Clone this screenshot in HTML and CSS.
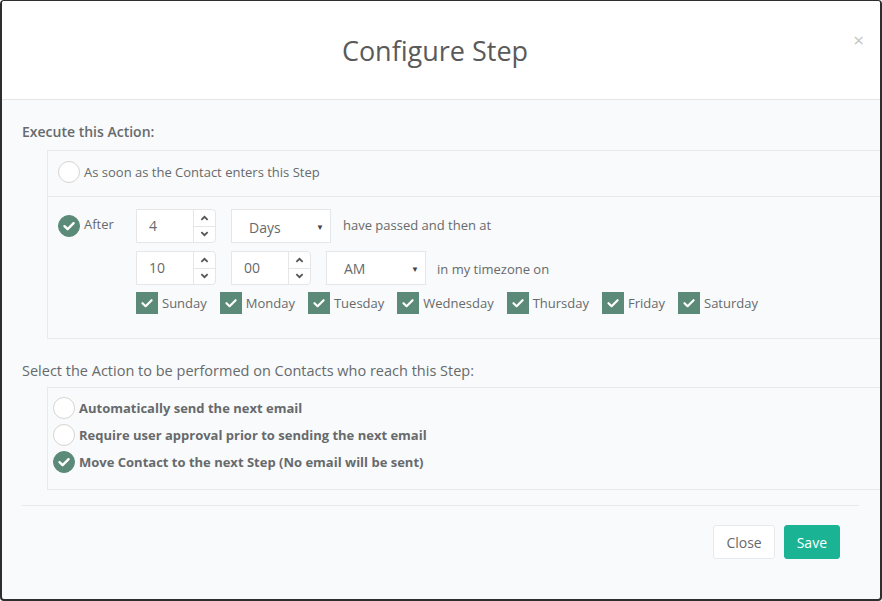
FILE: index.html
```html
<!DOCTYPE html>
<html>
<head>
<meta charset="utf-8">
<link rel="stylesheet" href="styles.css">
</head>
<body>
<div class="modal">
  <div class="modal-header">
    <h4 class="modal-title">Configure Step</h4>
    <span class="close">&times;</span>
  </div>
  <div class="modal-body">
    <div class="section-title strong">Execute this Action:</div>
    <div class="box box1">
      <div class="row row-first">
        <span class="radio"></span>
        <span class="label">As soon as the Contact enters this Step</span>
      </div>
      <div class="row row-after">
        <div class="after-col">
          <span class="radio checked"><svg viewBox="0 0 22 22" width="22" height="22"><path d="M6.5 11.2 L9.6 14.2 L15.6 8.2" fill="none" stroke="#fff" stroke-width="2.4" stroke-linecap="round" stroke-linejoin="round"/></svg></span>
          <span class="label">After</span>
        </div>
        <div class="controls">
          <div class="line">
            <div class="spin">
              <span class="val">4</span>
              <div class="arrows">
                <span class="arr"><svg viewBox="0 0 10 6" width="9" height="6"><path d="M1.5 5 L5 1.6 L8.5 5" fill="none" stroke="#555" stroke-width="2"/></svg></span>
                <span class="arr"><svg viewBox="0 0 10 6" width="9" height="6"><path d="M1.5 1 L5 4.4 L8.5 1" fill="none" stroke="#555" stroke-width="2"/></svg></span>
              </div>
            </div>
            <div class="select sel-days"><span>Days</span><span class="caret">&#9660;</span></div>
            <span class="text">have passed and then at</span>
          </div>
          <div class="line line2">
            <div class="spin">
              <span class="val">10</span>
              <div class="arrows">
                <span class="arr"><svg viewBox="0 0 10 6" width="9" height="6"><path d="M1.5 5 L5 1.6 L8.5 5" fill="none" stroke="#555" stroke-width="2"/></svg></span>
                <span class="arr"><svg viewBox="0 0 10 6" width="9" height="6"><path d="M1.5 1 L5 4.4 L8.5 1" fill="none" stroke="#555" stroke-width="2"/></svg></span>
              </div>
            </div>
            <div class="spin">
              <span class="val">00</span>
              <div class="arrows">
                <span class="arr"><svg viewBox="0 0 10 6" width="9" height="6"><path d="M1.5 5 L5 1.6 L8.5 5" fill="none" stroke="#555" stroke-width="2"/></svg></span>
                <span class="arr"><svg viewBox="0 0 10 6" width="9" height="6"><path d="M1.5 1 L5 4.4 L8.5 1" fill="none" stroke="#555" stroke-width="2"/></svg></span>
              </div>
            </div>
            <div class="select sel-ampm"><span>AM</span><span class="caret">&#9660;</span></div>
            <span class="text tz">in my timezone on</span>
          </div>
          <div class="days">
            <label class="day"><span class="cb"><svg viewBox="0 0 22 22" width="22" height="22"><path d="M6.5 11.2 L9.6 14.2 L15.6 8.2" fill="none" stroke="#fff" stroke-width="2.2" stroke-linecap="round" stroke-linejoin="round"/></svg></span>Sunday</label>
            <label class="day"><span class="cb"><svg viewBox="0 0 22 22" width="22" height="22"><path d="M6.5 11.2 L9.6 14.2 L15.6 8.2" fill="none" stroke="#fff" stroke-width="2.2" stroke-linecap="round" stroke-linejoin="round"/></svg></span>Monday</label>
            <label class="day"><span class="cb"><svg viewBox="0 0 22 22" width="22" height="22"><path d="M6.5 11.2 L9.6 14.2 L15.6 8.2" fill="none" stroke="#fff" stroke-width="2.2" stroke-linecap="round" stroke-linejoin="round"/></svg></span>Tuesday</label>
            <label class="day"><span class="cb"><svg viewBox="0 0 22 22" width="22" height="22"><path d="M6.5 11.2 L9.6 14.2 L15.6 8.2" fill="none" stroke="#fff" stroke-width="2.2" stroke-linecap="round" stroke-linejoin="round"/></svg></span>Wednesday</label>
            <label class="day"><span class="cb"><svg viewBox="0 0 22 22" width="22" height="22"><path d="M6.5 11.2 L9.6 14.2 L15.6 8.2" fill="none" stroke="#fff" stroke-width="2.2" stroke-linecap="round" stroke-linejoin="round"/></svg></span>Thursday</label>
            <label class="day"><span class="cb"><svg viewBox="0 0 22 22" width="22" height="22"><path d="M6.5 11.2 L9.6 14.2 L15.6 8.2" fill="none" stroke="#fff" stroke-width="2.2" stroke-linecap="round" stroke-linejoin="round"/></svg></span>Friday</label>
            <label class="day"><span class="cb"><svg viewBox="0 0 22 22" width="22" height="22"><path d="M6.5 11.2 L9.6 14.2 L15.6 8.2" fill="none" stroke="#fff" stroke-width="2.2" stroke-linecap="round" stroke-linejoin="round"/></svg></span>Saturday</label>
          </div>
        </div>
      </div>
    </div>

    <div class="section-title second">Select the Action to be performed on Contacts who reach this Step:</div>
    <div class="box box2">
      <div class="opt"><span class="radio"></span><span class="label bold">Automatically send the next email</span></div>
      <div class="opt"><span class="radio"></span><span class="label bold">Require user approval prior to sending the next email</span></div>
      <div class="opt"><span class="radio checked"><svg viewBox="0 0 22 22" width="22" height="22"><path d="M6.5 11.2 L9.6 14.2 L15.6 8.2" fill="none" stroke="#fff" stroke-width="2.4" stroke-linecap="round" stroke-linejoin="round"/></svg></span><span class="label bold">Move Contact to the next Step (No email will be sent)</span></div>
    </div>

    <div class="footer">
      <button class="btn btn-white">Close</button>
      <button class="btn btn-primary">Save</button>
    </div>
  </div>
</div>
</body>
</html>
```

FILE: styles.css
```css
* { box-sizing: border-box; }
html, body { margin: 0; padding: 0; }
body {
  width: 882px;
  height: 601px;
  overflow: hidden;
  font-family: "Open Sans", "Liberation Sans", sans-serif;
  font-size: 13px;
  color: #676a6c;
  background: #fff;
}
.modal {
  width: 882px;
  height: 601px;
  border: 2px solid #2e2e2e;
  border-top-width: 1px;
  border-radius: 4px;
  background: #f8fafb;
  overflow: hidden;
  display: flex;
  flex-direction: column;
}
.modal-header {
  position: relative;
  background: #fff;
  height: 99px;
  border-bottom: 1px solid #e5e5e5;
  display: flex;
  align-items: center;
  justify-content: center;
  padding-right: 12px;
}
.modal-title {
  margin: 0;
  font-size: 27px;
  font-weight: 400;
  color: #5a5a5a;
  line-height: 30px;
  padding-top: 1px;
}
.close {
  position: absolute;
  right: 16px;
  top: 29px;
  font-size: 19px;
  color: #c4c4c4;
  line-height: 20px;
}
.modal-body {
  padding: 22px 21px 0 20px;
  flex: 1;
}
.section-title {
  font-size: 14px;
  line-height: 20px;
  color: #676a6c;
}
.section-title.strong { font-weight: 600; }
.box {
  margin-left: 25px;
  margin-right: -21px;
  border: 1px solid #e7eaec;
  border-right: none;
}
.box1 { margin-top: 8px; }
.row { display: flex; }
.row-first {
  align-items: center;
  padding: 10px 10px 13px;
  border-bottom: 1px solid #e7eaec;
}
.radio {
  width: 22px;
  height: 22px;
  border-radius: 50%;
  border: 1px solid #d8d5cf;
  background: #fff;
  flex: none;
  display: inline-block;
}
.radio.checked {
  background: #5b8b78;
  border-color: #5b8b78;
  position: relative;
}
.radio.checked svg { position: absolute; left: -1px; top: -1px; }
.label { margin-left: 4px; line-height: 22px; }
.bold { font-weight: 700; }
.row-after { padding: 12px 10px 24px; }
.after-col {
  width: 78px;
  display: flex;
  align-items: flex-start;
  padding-top: 6px;
}
.after-col .label { line-height: 18px; }
.controls { display: flex; flex-direction: column; }
.line { display: flex; align-items: center; gap: 15px; }
.line2 { margin-top: 8px; }
.spin {
  width: 80px;
  height: 34px;
  background: #fff;
  border: 1px solid #e5e6e7;
  border-radius: 0 4px 4px 0;
  display: flex;
  font-size: 14px;
}
.spin .val {
  flex: 1;
  padding-left: 12px;
  line-height: 32px;
  color: #676a6c;
}
.arrows {
  width: 22px;
  border-left: 1px solid #e5e6e7;
  display: flex;
  flex-direction: column;
}
.arr {
  flex: 1;
  display: flex;
  align-items: center;
  justify-content: center;
}
.arr + .arr { border-top: 1px solid #e5e6e7; }
.select {
  width: 100px;
  height: 34px;
  background: #fff;
  border: 1px solid #e5e6e7;
  display: flex;
  align-items: center;
  justify-content: space-between;
  padding: 0 6px 0 17px;
  font-size: 14px;
  color: #676a6c;
}
.sel-days span:first-child { padding-top: 2px; }
.caret { font-size: 8px; color: #444; }
.text { margin-left: -3px; padding-bottom: 2px; }
.tz { margin-left: -1px; padding-bottom: 0; margin-top: 2px; }
.sel-ampm { margin-right: -3px; }
.days { display: flex; margin-top: 7px; gap: 13px; }
.day { display: flex; align-items: center; line-height: 22px; }
.cb {
  width: 22px;
  height: 22px;
  background: #5b8b78;
  margin-right: 4px;
  display: inline-block;
}
.cb svg { display: block; }
.second { margin-top: 22px; font-size: 14.5px; }
.box2 {
  margin-top: 6px;
  padding: 9px 10px 16px 5px;
}
.opt { display: flex; align-items: center; height: 22px; }
.opt + .opt { margin-top: 5px; }
.opt .label { margin-left: 4px; }
.footer {
  margin-top: 15px;
  border-top: 1px solid #e7eaec;
  padding-top: 19px;
  display: flex;
  justify-content: flex-end;
  gap: 9px;
  padding-right: 19px;
}
.btn {
  font-family: "Open Sans", "Liberation Sans", sans-serif;
  font-size: 14px;
  height: 34px;
  border-radius: 3px;
  padding: 0 12px;
  border: 1px solid #e7eaec;
}
.btn-white { background: #fff; color: #676a6c; }
.btn-primary { background: #1ab394; border-color: #1ab394; color: #fff; }
```
